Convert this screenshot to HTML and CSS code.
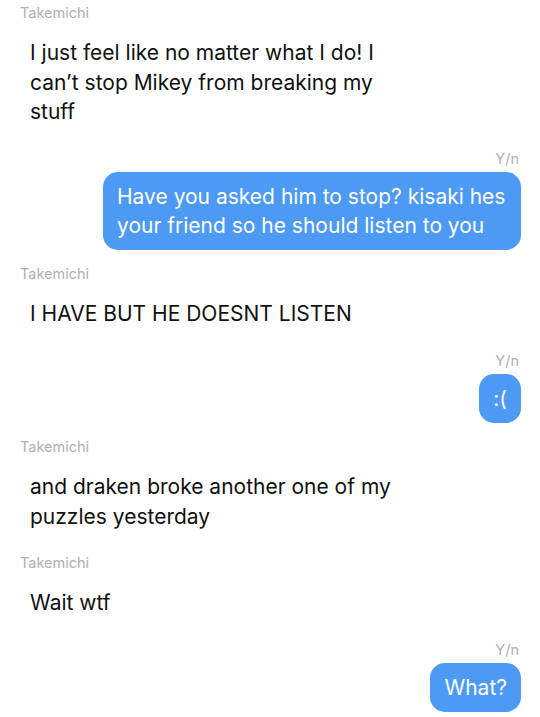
FILE: index.html
```html
<!DOCTYPE html>
<html lang="en">
<head>
    <meta charset="UTF-8">
    <meta name="viewport" content="width=device-width, initial-scale=1.0">
    <title>Takemichi</title>
    <link rel="stylesheet" href="styles.css">
</head>
<body>
    <div class="chat">
        <div class="msg received">
            <div class="sender">Takemichi</div>
            <div class="bubble">I just feel like no matter what I do! I can’t stop Mikey from breaking my stuff</div>
        </div>
        <div class="msg sent">
            <div class="sender">Y/n</div>
            <div class="bubble">Have you asked him to stop? kisaki hes your friend so he should listen to you</div>
        </div>
        <div class="msg received">
            <div class="sender">Takemichi</div>
            <div class="bubble">I HAVE BUT HE DOESNT LISTEN</div>
        </div>
        <div class="msg sent">
            <div class="sender">Y/n</div>
            <div class="bubble">:(</div>
        </div>
        <div class="msg received">
            <div class="sender">Takemichi</div>
            <div class="bubble">and draken broke another one of my puzzles yesterday</div>
        </div>
        <div class="msg received">
            <div class="sender">Takemichi</div>
            <div class="bubble">Wait wtf</div>
        </div>
        <div class="msg sent">
            <div class="sender">Y/n</div>
            <div class="bubble">What?</div>
        </div>
    </div>
</body>
</html>
```

FILE: styles.css
```css
body {
    margin: 0;
    background: #fff;
    font-family: 'Inter', 'Liberation Sans', sans-serif;
}
.chat {
    display: flex;
    flex-direction: column;
    gap: 15px;
    padding: 4px 19px 0 20px;
}
.msg {
    display: flex;
    flex-direction: column;
}
.sender {
    font-size: 14.5px;
    line-height: 18px;
    color: #b0b0b0;
    margin-bottom: 4px;
}
.bubble {
    font-size: 21px;
    line-height: 29px;
    border-radius: 15px;
}
.received .bubble {
    color: #111;
    line-height: 29.5px;
    padding: 12px 14px 8px 10px;
    max-width: 370px;
}
.sent {
    align-items: flex-end;
}
.sent .sender {
    padding-right: 2px;
}
.sent .bubble {
    background: #4c9af4;
    color: #fff;
    padding: 10.5px 14px 10px;
    max-width: 390px;
}
```
